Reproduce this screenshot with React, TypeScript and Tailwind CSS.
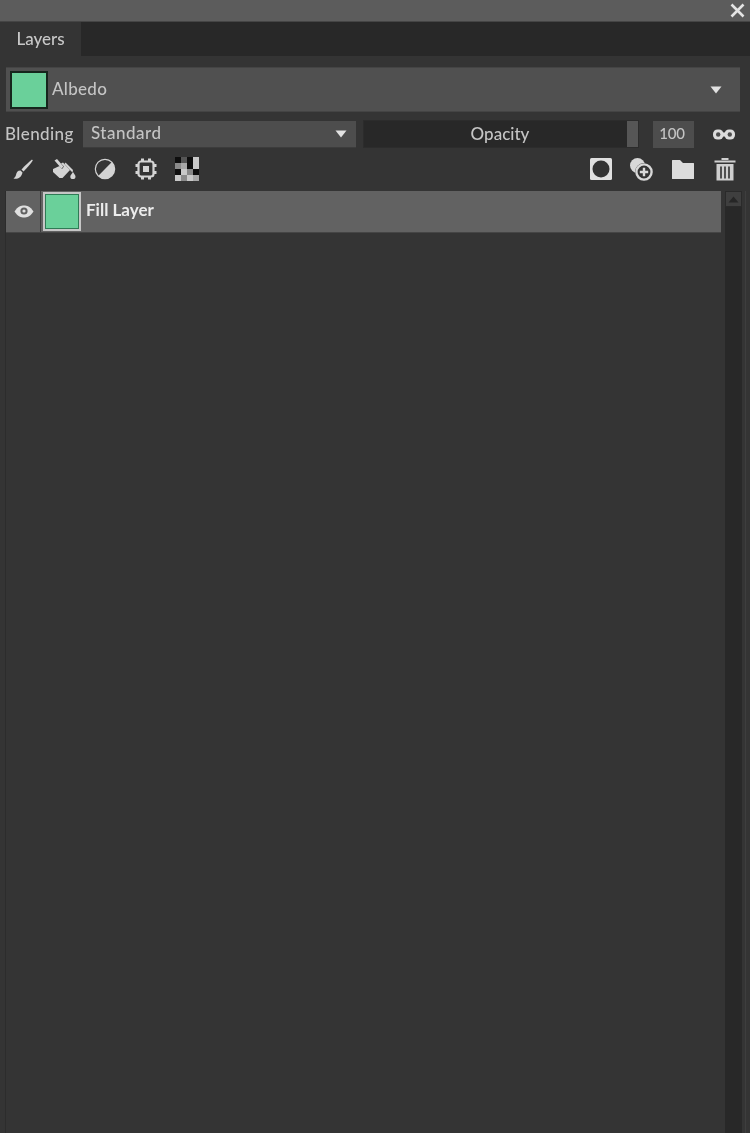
import React from "react";

const Caret = () => (
  <svg width="12" height="8" viewBox="0 0 12 8">
    <path d="M0.5 0.5H11.5L6 7.5Z" fill="#e2e2e2" />
  </svg>
);

const Brush = () => (
  <svg width="24" height="24" viewBox="0 0 24 24">
    <path d="M22 2.5 C19 5 15 8.5 11.5 12.5 L13.5 14.5 C17 11 20.5 7 22.8 3.5 Z" fill="#d4d4d4" />
    <path d="M10.5 13.5 C7.5 13.5 6.5 15.5 6 18 C5.6 19.5 4.8 20.5 3.5 21.5 C7 22.5 11.5 21 12.5 15.5 Z" fill="#d4d4d4" />
  </svg>
);

const Bucket = () => (
  <svg width="24" height="24" viewBox="0 0 24 24">
    <path d="M2.5 3.5 L5 2 L11.5 9.5 L9.5 11.5 Z" fill="#d4d4d4" />
    <path d="M1 12 L7.5 9 L10 12 L12 9.5 L9 6.5 L11 5.5 L18 13 L10.5 21 L7.5 21 L1 15 Z" fill="#d4d4d4" />
    <path d="M13.5 5.5 L21 13 L20.5 15.5 L19 14 L12.5 7 Z" fill="#d4d4d4" />
    <path d="M21 15 C22 17 23.5 18 23.5 19.5 A2.6 2.6 0 0 1 18.3 19.5 C18.3 18 20 17 21 15 Z" fill="#d4d4d4" />
  </svg>
);

const Contrast = () => (
  <svg width="22" height="22" viewBox="0 0 22 22">
    <circle cx="11" cy="11" r="9.5" fill="#d4d4d4" stroke="#d4d4d4" strokeWidth="1.5" />
    <path d="M17.4 4.6 A9 9 0 0 0 4.6 17.4 Z" fill="#353535" />
  </svg>
);

const Chip = () => (
  <svg width="22" height="22" viewBox="0 0 22 22">
    <g fill="#d4d4d4">
      <rect x="6" y="0.5" width="3" height="3" />
      <rect x="13" y="0.5" width="3" height="3" />
      <rect x="6" y="18.5" width="3" height="3" />
      <rect x="13" y="18.5" width="3" height="3" />
      <rect x="0.5" y="6" width="3" height="3" />
      <rect x="0.5" y="13" width="3" height="3" />
      <rect x="18.5" y="6" width="3" height="3" />
      <rect x="18.5" y="13" width="3" height="3" />
      <rect x="8" y="8" width="6" height="6" />
    </g>
    <rect x="3.5" y="3.5" width="15" height="15" rx="2.5" fill="none" stroke="#d4d4d4" strokeWidth="2.2" />
  </svg>
);

const Checker = () => {
  const k = "#0e0e0e";
  const g = "#8a8a8a";
  const l = "#c8c8c8";
  const cells = [
    [k, "#555", k, l],
    [g, "#a8a8a8", k, l],
    [k, l, "#888", k],
    [l, g, l, "#a8a8a8"],
  ];
  return (
    <svg width="24" height="24" viewBox="0 0 24 24">
      {cells.map((row, y) =>
        row.map((c, x) => <rect key={`${x}-${y}`} x={x * 6} y={y * 6} width="6" height="6" fill={c} />)
      )}
    </svg>
  );
};

const Mask = () => (
  <svg width="22" height="22" viewBox="0 0 22 22">
    <rect width="22" height="22" rx="1.5" fill="#e0e0e0" />
    <circle cx="11" cy="11" r="8.5" fill="#333333" />
  </svg>
);

const AddLayer = () => (
  <svg width="24" height="24" viewBox="0 0 24 24">
    <circle cx="8.5" cy="8.5" r="7.5" fill="#d8d8d8" />
    <circle cx="15" cy="15" r="9" fill="#333333" />
    <circle cx="15" cy="15" r="7.6" fill="none" stroke="#d8d8d8" strokeWidth="2.4" />
    <path d="M15 10.8V19.2M10.8 15H19.2" stroke="#d8d8d8" strokeWidth="2.4" />
  </svg>
);

const Folder = () => (
  <svg width="22" height="20" viewBox="0 0 22 20">
    <path d="M0 1.5 Q0 1 0.5 1 H8 L11 4 H21.5 Q22 4 22 4.5 V19.5 Q22 20 21.5 20 H0.5 Q0 20 0 19.5 Z" fill="#dcdcdc" />
  </svg>
);

const Trash = () => (
  <svg width="22" height="24" viewBox="0 0 22 24">
    <path d="M0.5 3.5 H21.5 V5.5 H0.5 Z M7.5 1 H14.5 V3 H7.5 Z" fill="#cfcfcf" />
    <path d="M2.5 7 H19.5 V23.5 H2.5 Z" fill="#cfcfcf" />
    <path d="M7 9.5V21.5M11 9.5V21.5M15 9.5V21.5" stroke="#3a3a3a" strokeWidth="1.7" />
  </svg>
);

const Link = () => (
  <svg width="22" height="11" viewBox="0 0 22 11">
    <rect x="0" y="0.5" width="10.5" height="10" rx="4.5" fill="#dcdcdc" />
    <rect x="11.5" y="0.5" width="10.5" height="10" rx="4.5" fill="#dcdcdc" />
    <rect x="8" y="3.5" width="6" height="4" fill="#dcdcdc" />
    <circle cx="5.2" cy="5.5" r="2.2" fill="#4c4c4c" />
    <circle cx="16.8" cy="5.5" r="2.2" fill="#4c4c4c" />
  </svg>
);

const Eye = () => (
  <svg width="20" height="13" viewBox="0 0 20 13">
    <path d="M0.5 6.5 C4 1 7 0.5 10 0.5 C13 0.5 16 1 19.5 6.5 C16 12 13 12.5 10 12.5 C7 12.5 4 12 0.5 6.5 Z" fill="#e0e0e0" />
    <circle cx="10" cy="6" r="3.6" fill="#616161" />
    <circle cx="10" cy="6" r="1.6" fill="#e0e0e0" />
  </svg>
);

const Close = () => (
  <svg width="15" height="15" viewBox="0 0 15 15">
    <path d="M1.5 1.5L13.5 13.5M13.5 1.5L1.5 13.5" stroke="#e4e4e4" strokeWidth="2.6" />
  </svg>
);

export default function App() {
  return (
    <div
      className="flex h-[1133px] w-[750px] flex-col overflow-hidden bg-[#343434] text-[17px] text-[#c4c4c4] blur-[0.4px]"
      style={{ fontFamily: 'Lato, "Noto Sans", sans-serif' }}
    >
      {/* title bar */}
      <div className="flex h-[22px] shrink-0 items-center justify-end border-b border-[#454545] bg-[#5c5c5c] pr-[5px]">
        <Close />
      </div>

      {/* tabs */}
      <div className="flex h-[34px] shrink-0 bg-[#282828]">
        <div className="flex w-[81px] items-center justify-center bg-[#343434] text-[17px] font-medium text-[#c8c8c8]">
          Layers
        </div>
      </div>

      {/* texture set */}
      <div className="mx-[6px] mt-[11px] flex h-[45px] w-[734px] shrink-0 items-center border-y border-[#444] bg-[#505050] pl-[4px] pr-[18px]">
        <div className="h-[38px] w-[38px] border-2 border-[#16261d] bg-[#6ad09a]" />
        <span className="ml-[4px] flex-1 pb-[2px] text-[17px] font-medium tracking-[0.3px] text-[#c4c4c4]">Albedo</span>
        <Caret />
      </div>

      {/* blending */}
      <div className="mt-[8px] flex h-[28px] shrink-0 items-center pl-[5px]">
        <span className="w-[78px] pb-[1px] text-[17px] font-medium tracking-[0.4px] text-[#c4c4c4]">Blending</span>
        <div className="flex h-[27px] w-[273px] items-center justify-between border-b border-[#3c3c3c] bg-[#4d4d4d] pl-[8px] pr-[9px] text-[17px] font-medium">
          <span className="pb-[1px] tracking-[0.5px]">Standard</span>
          <Caret />
        </div>
        <div className="relative ml-[7px] flex h-[28px] w-[276px] items-center justify-center border border-[#2c2c2c] bg-[#282828] pr-[2px] text-[#c4c4c4]">
          <span className="pb-[1px] text-[17px] font-medium">Opacity</span>
          <div className="absolute right-0 top-0 h-full w-[11px] bg-[#565656]" />
        </div>
        <div className="ml-[14px] flex h-[27px] w-[41px] items-center justify-center bg-[#4d4d4d] pb-[1px] pr-[3px] text-[15px] font-medium tracking-[-0.2px]">100</div>
        <div className="ml-[19px] flex">
          <Link />
        </div>
      </div>

      {/* toolbar */}
      <div className="mt-[8px] flex h-[26px] shrink-0 items-center justify-between pl-[10px] pr-[14px]">
        <div className="flex items-center gap-[18px]">
          <Brush />
          <Bucket />
          <Contrast />
          <div className="ml-[1px] flex">
            <Chip />
          </div>
          <Checker />
        </div>
        <div className="flex items-center">
          <Mask />
          <div className="ml-[17px] flex">
            <AddLayer />
          </div>
          <div className="ml-[19px] flex">
            <Folder />
          </div>
          <div className="ml-[20px] flex">
            <Trash />
          </div>
        </div>
      </div>

      {/* list + scrollbar */}
      <div className="mt-[9px] flex min-h-0 flex-1 pl-[5px]">
        <div className="w-[716px] shrink-0 border-l border-[#2c2c2c]">
          <div className="flex h-[42px] items-center border-b border-[#454545] bg-[#626262]">
            <div className="flex h-full w-[34px] items-center justify-center pl-[2px]">
              <Eye />
            </div>
            <div className="h-full w-[1px] bg-[#3c3c3c]" />
            <div className="ml-[2px] h-[39px] w-[38px] border-2 border-[#c6c6c6] bg-[#2f7a55] p-[1px]">
              <div className="h-full w-full bg-[#6ad09a]" />
            </div>
            <span className="ml-[5px] pb-[4px] text-[17px] font-bold text-[#ececec]">Fill Layer</span>
          </div>
        </div>
        <div className="ml-[4px] flex w-[17px] shrink-0 flex-col bg-[#282828]">
          <div className="flex h-[16px] items-center justify-center border border-[#2a2a2a] bg-[#3f3f3f]">
            <svg width="11" height="7" viewBox="0 0 11 7">
              <path d="M5.5 0.5L10.5 6.5H0.5Z" fill="#262626" />
            </svg>
          </div>
        </div>
        <div className="ml-[3px] w-[1px] bg-[#3e3e3e]" />
      </div>
    </div>
  );
}
